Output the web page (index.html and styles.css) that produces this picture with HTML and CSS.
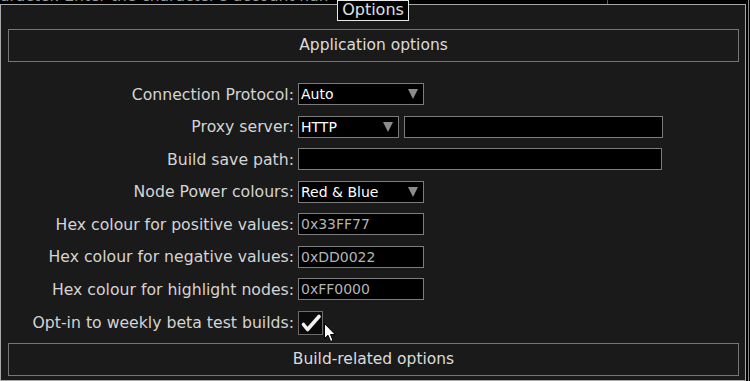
FILE: index.html
```html
<!DOCTYPE html>
<html lang="en">
<head>
    <meta charset="UTF-8">
    <title>Options</title>
    <link rel="stylesheet" href="styles.css">
</head>
<body>
    <div class="screen">
        <div class="backdrop">
            <div class="backdrop-text">aracter. Enter the character's account name</div>
        </div>

        <div class="dialog">
            <div class="dialog-title">Options</div>

            <div class="section">Application options</div>

            <div class="form">
                <label class="label">Connection Protocol:</label>
                <div class="field">
                    <div class="select select-wide">Auto<span class="arrow"></span></div>
                </div>

                <label class="label">Proxy server:</label>
                <div class="field">
                    <div class="select select-proxy">HTTP<span class="arrow"></span></div>
                    <div class="input input-proxy"></div>
                </div>

                <label class="label">Build save path:</label>
                <div class="field">
                    <div class="input input-path"></div>
                </div>

                <label class="label">Node Power colours:</label>
                <div class="field">
                    <div class="select select-wide">Red &amp; Blue<span class="arrow"></span></div>
                </div>

                <label class="label">Hex colour for positive values:</label>
                <div class="field">
                    <div class="input input-hex">0x33FF77</div>
                </div>

                <label class="label">Hex colour for negative values:</label>
                <div class="field">
                    <div class="input input-hex">0xDD0022</div>
                </div>

                <label class="label">Hex colour for highlight nodes:</label>
                <div class="field">
                    <div class="input input-hex">0xFF0000</div>
                </div>

                <label class="label">Opt-in to weekly beta test builds:</label>
                <div class="field field-check">
                    <div class="checkbox">
                        <svg width="24" height="24" viewBox="0 0 24 24">
                            <path d="M5.5 13.5 L9.5 18.5 L21 5.5" fill="none" stroke="#f0f0f0" stroke-width="3.6" stroke-linecap="round" stroke-linejoin="round"/>
                        </svg>
                    </div>
                </div>
            </div>

            <div class="section">Build-related options</div>

            <svg class="cursor" width="13" height="20" viewBox="0 0 13 20">
                <path d="M0.5 0.5 L0.5 15.5 L4 12.2 L6.6 18.5 L9 17.5 L6.5 11.5 L11.2 11.5 Z" fill="#ffffff" stroke="#000000" stroke-width="1"/>
            </svg>
        </div>
    </div>
</body>
</html>
```

FILE: styles.css
```css
* {
    margin: 0;
    padding: 0;
    box-sizing: border-box;
}

body {
    background-color: #000000;
    font-family: 'DejaVu Sans', 'Liberation Sans', sans-serif;
    width: 750px;
    height: 381px;
    overflow: hidden;
}

.screen {
    width: 749px;
    height: 381px;
    border-right: 1px solid #8a8a8a;
}

/* window behind the dialog */
.backdrop {
    height: 4px;
    overflow: hidden;
    width: 608px;
    border-right: 1px solid #5a5a5a;
}

.backdrop-text {
    margin-top: -12px;
    font-size: 15.5px;
    line-height: 16px;
    color: #9a9a9a;
    white-space: nowrap;
    width: 328px;
    text-align: right;
    overflow: hidden;
}

.dialog {
    position: relative;
    width: 746px;
    height: 377px;
    background-color: #1a1a1a;
    border: 1px solid #a8a8a8;
    padding: 24px 6px 0 7px;
}

.dialog-title {
    position: absolute;
    left: 336px;
    top: -5px;
    width: 72px;
    height: 21px;
    background-color: #000000;
    border: 1px solid #e8e8e8;
    color: #e0e0e0;
    font-size: 16px;
    line-height: 17px;
    text-align: center;
}

.section {
    height: 33px;
    border: 1px solid #767676;
    color: #dcdcdc;
    font-size: 15.5px;
    line-height: 31px;
    text-align: center;
}

.form {
    display: grid;
    grid-template-columns: 286px 1fr;
    grid-template-rows: repeat(7, 22px) 24px;
    column-gap: 4px;
    row-gap: 10.5px;
    margin: 21px 0 8px;
}

.label {
    display: flex;
    align-items: center;
    justify-content: flex-end;
    color: #d4d4d4;
    font-size: 15.7px;
    white-space: nowrap;
}

.field {
    display: flex;
    gap: 5px;
    height: 22px;
}

.field-check {
    height: 24px;
}

.select,
.input {
    position: relative;
    height: 22px;
    background-color: #000000;
    border: 1px solid #7c7c7c;
    color: #ffffff;
    font-size: 14px;
    line-height: 20px;
    padding-left: 2px;
    white-space: nowrap;
}

.select-wide {
    width: 126px;
}

.select-proxy {
    width: 101px;
}

.input-proxy {
    width: 259px;
}

.input-path {
    width: 364px;
}

.input-hex {
    width: 126px;
    color: #b4b4b4;
}

.arrow {
    position: absolute;
    right: 5px;
    top: 5px;
    width: 0;
    height: 0;
    border-left: 5px solid transparent;
    border-right: 5px solid transparent;
    border-top: 10px solid #8c8c8c;
}

.checkbox {
    width: 25px;
    height: 24px;
    background-color: #0a0a0a;
    border: 1px solid #6c6c6c;
}

.checkbox svg {
    display: block;
    margin: -1px 0 0 -1px;
}

.cursor {
    position: absolute;
    left: 323px;
    top: 318px;
}
```
